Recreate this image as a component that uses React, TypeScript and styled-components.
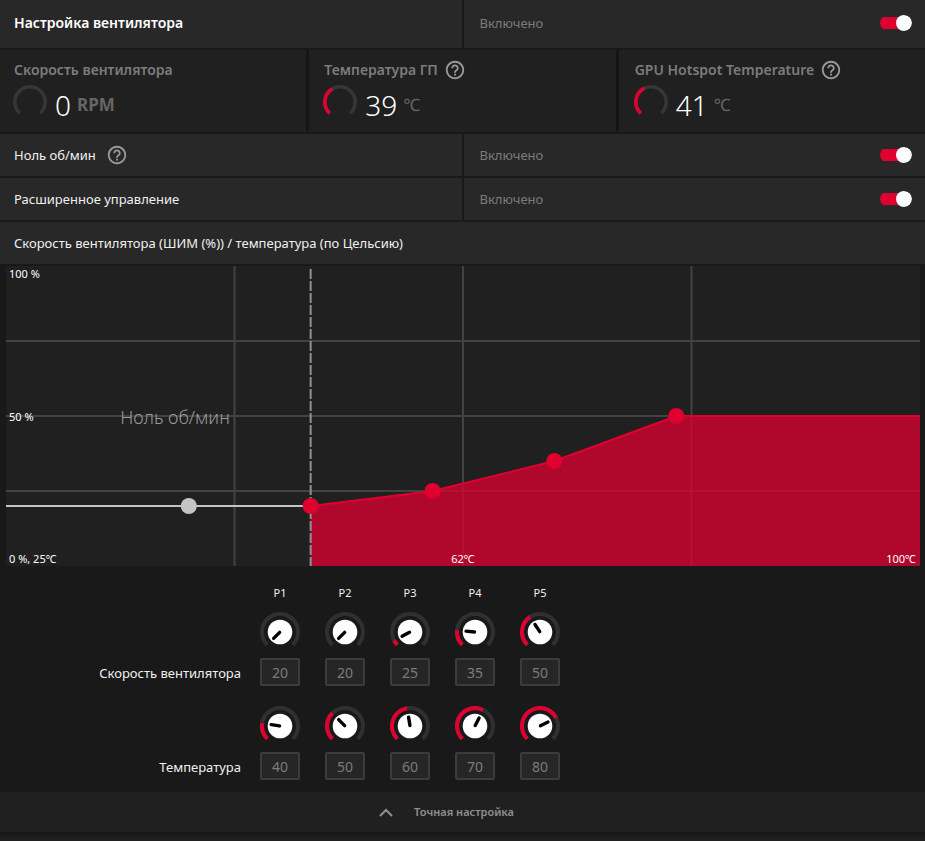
import React, { useState } from "react";
import styled, { createGlobalStyle, css } from "styled-components";
import { MdHelpOutline } from "react-icons/md";

const red = "#e00030";

const GlobalStyle = createGlobalStyle`
  *, *::before, *::after { box-sizing: border-box; }
  body {
    margin: 0;
    background: #191919;
    color: #f0f0f0;
    font-family: "Noto Sans", "Open Sans", "Noto Sans CJK SC", sans-serif;
    font-size: 13px;
    line-height: 20px;
  }
`;

const Page = styled.main`
  display: flex;
  flex-direction: column;
  min-height: 100vh;
`;

const Panel = styled.section`
  display: flex;
  flex-direction: column;
  gap: 2px;
`;

const NameCell = styled.div`
  display: flex;
  align-items: center;
  gap: 10px;
  padding: 0 14px;
  background: #282828;
`;

const ValueCell = styled.label`
  display: flex;
  align-items: center;
  justify-content: space-between;
  padding: 0 13px 0 16px;
  background: #282828;
  color: #7c7c7c;
`;

const SettingRow = styled.div<{ $header?: boolean }>`
  display: grid;
  grid-template-columns: 1fr 1fr;
  gap: 2px;
  min-height: 42px;

  ${(p) =>
    p.$header &&
    css`
      min-height: 48px;
      ${NameCell}, ${ValueCell} {
        padding-bottom: 2px;
      }
      ${NameCell} {
        color: #ffffff;
        font-size: 14px;
        font-weight: 600;
      }
    `}
`;

const Switch = styled.input`
  appearance: none;
  display: flex;
  align-items: center;
  width: 32px;
  height: 16px;
  margin: 0;
  border-radius: 8px;
  background: linear-gradient(${red}, ${red}) 0 50% / 24px 12px no-repeat;
  clip-path: inset(0 round 8px);
  cursor: pointer;

  &::before {
    content: "";
    width: 16px;
    height: 16px;
    margin-left: 16px;
    border-radius: 50%;
    background: #ffffff;
  }
  &:not(:checked) {
    filter: grayscale(1);
  }
  &:not(:checked)::before {
    margin-left: 0;
  }
`;

const HelpButton = styled.button`
  display: flex;
  padding: 0;
  border: 0;
  background: none;
  color: #9a9a9a;
  font-size: 22px;
  cursor: pointer;
`;

const Stats = styled.div`
  display: grid;
  grid-template-columns: repeat(3, 1fr);
  gap: 3px;
  background: #151515;
`;

const StatCard = styled.div`
  display: flex;
  flex-direction: column;
  height: 82px;
  padding: 9px 14px 0 15px;
  background: #202020;
  &:first-child {
    padding-left: 14px;
  }
  &:last-child {
    padding-left: 16px;
  }
`;

const StatTitle = styled.div`
  display: flex;
  align-items: center;
  gap: 6px;
  height: 22px;
  color: #7c7c7c;
  font-size: 14px;
  font-weight: 600;
`;

const StatBody = styled.div`
  display: flex;
  align-items: flex-start;
  height: 40px;
`;

const Gauge = styled.svg`
  width: 34px;
  height: 34px;
  margin: 4px 8px 0 -1px;
  flex: none;
`;

const StatValue = styled.span`
  color: #ffffff;
  font-size: 28px;
  font-weight: 300;
  line-height: 48px;
`;

const StatUnit = styled.span<{ $bold?: boolean }>`
  margin-left: 6px;
  color: #666666;
  font-size: 17px;
  font-weight: ${(p) => (p.$bold ? 700 : 400)};
  line-height: 48px;
`;

const ChartTitle = styled.h2`
  display: flex;
  align-items: center;
  height: 42px;
  margin: 0;
  padding: 0 14px;
  background: #282828;
  font-size: 13px;
  font-weight: 400;
`;

const ChartArea = styled.div`
  position: relative;
  height: 300px;
  margin: 0 5px 0 6px;
  background: #202020;
`;

const ChartSvg = styled.svg`
  display: block;
  width: 100%;
  height: 300px;
`;

const places = {
  top: css`top: 0; left: 3px;`,
  middle: css`top: 143px; left: 3px;`,
  origin: css`bottom: -1px; left: 3px;`,
  center: css`bottom: -1px; left: 0; right: 0; text-align: center;`,
  end: css`bottom: -1px; right: 4px;`,
  zone: css`top: 139px; left: 0; width: 37%; text-align: center;`,
};

const ChartLabel = styled.span<{ $place: keyof typeof places }>`
  position: absolute;
  color: ${(p) => (p.$place === "zone" ? "#9a9a9a" : "#ffffff")};
  font-size: ${(p) => (p.$place === "zone" ? 18 : 11)}px;
  font-weight: ${(p) => (p.$place === "zone" ? 300 : 400)};
  line-height: ${(p) => (p.$place === "zone" ? 24 : 16)}px;
  pointer-events: none;
  ${(p) => places[p.$place]}
`;

const Points = styled.div`
  display: flex;
  flex-direction: column;
  gap: 12px;
  padding: 20px 0 12px;
`;

const PointControls = styled.div`
  display: flex;
  flex-direction: column;
  gap: 20px;
`;

const PointRow = styled.div`
  display: grid;
  grid-template-columns: 241px repeat(5, 40px);
  column-gap: 25px;
  margin-left: -6px;
`;

const PointName = styled.span`
  font-size: 11px;
  line-height: 14px;
  text-align: center;
  &:first-child {
    grid-column: 2;
  }
`;

const PointsLabel = styled.span`
  justify-self: end;
  margin: 51px -6px 0 0;
`;

const PointControl = styled.div`
  display: flex;
  flex-direction: column;
  align-items: center;
  gap: 6px;
`;

const Knob = styled.svg`
  display: block;
  width: 40px;
  height: 40px;
`;

const NumberBox = styled.input`
  width: 40px;
  height: 28px;
  padding: 0;
  border: 2px solid #3c3c3c;
  border-radius: 2px;
  background: #262626;
  color: #7c7c7c;
  font: inherit;
  font-size: 14px;
  text-align: center;
`;

const TuneButton = styled.button`
  display: flex;
  align-items: center;
  justify-content: center;
  gap: 21px;
  width: 100%;
  height: 40px;
  padding: 0 32px 0 0;
  border: 0;
  background: #202020;
  color: #909090;
  font: inherit;
  font-size: 11px;
  font-weight: 600;
  cursor: pointer;
`;

const Footer = styled.div`
  flex: 1;
  min-height: 9px;
  background: linear-gradient(#161616, #212020 8px);
`;

function polar(c: number, r: number, deg: number) {
  const a = (deg * Math.PI) / 180;
  return [c + r * Math.sin(a), c - r * Math.cos(a)];
}

function arc(c: number, r: number, start: number, sweep: number) {
  const [x1, y1] = polar(c, r, start);
  const [x2, y2] = polar(c, r, start + sweep);
  return `M${x1} ${y1}A${r} ${r} 0 ${sweep > 180 ? 1 : 0} 1 ${x2} ${y2}`;
}

function Help({ about }: { about: string }) {
  return (
    <HelpButton type="button" aria-label={about}>
      <MdHelpOutline />
    </HelpButton>
  );
}

function Toggle() {
  const [on, setOn] = useState(true);
  return (
    <ValueCell>
      {on ? "Включено" : "Отключено"}
      <Switch type="checkbox" role="switch" checked={on} onChange={() => setOn(!on)} />
    </ValueCell>
  );
}

interface StatProps {
  title: string;
  value: number;
  unit: string;
  percent: number;
  help?: boolean;
}

function Stat({ title, value, unit, percent, help }: StatProps) {
  return (
    <StatCard>
      <StatTitle>
        {title}
        {help && <Help about={title} />}
      </StatTitle>
      <StatBody>
        <Gauge viewBox="0 0 34 34" fill="none" strokeWidth="3.6" aria-hidden>
          <path d={arc(17, 15.2, 222, 276)} stroke="#363636" />
          {percent > 0 && <path d={arc(17, 15.2, 222, percent * 2.76)} stroke={red} />}
        </Gauge>
        <StatValue>{value}</StatValue>
        <StatUnit $bold={unit === "RPM"}>{unit}</StatUnit>
      </StatBody>
    </StatCard>
  );
}

const speeds = [20, 20, 25, 35, 50];
const temps = [40, 50, 60, 70, 80];
const xOf = (t: number) => ((t - 25) / 75) * 100;
const yOf = (s: number) => (100 - s) * 3;

function Chart() {
  const line = temps.slice(1).map((t, i) => `${xOf(t)},${yOf(speeds[i + 1])}`);
  const curve = [...line, `100,${yOf(speeds[4])}`].join(" ");
  const zero = `${xOf(temps[1])}%`;
  return (
    <ChartArea>
      <ChartSvg aria-hidden>
        <g stroke="#424242" strokeWidth="2">
          {[25, 50, 75].map((p) => (
            <line key={p} x1={`${p}%`} x2={`${p}%`} y1="0" y2="300" />
          ))}
          {[75, 150, 225].map((y) => (
            <line key={y} x1="0" x2="100%" y1={y} y2={y} />
          ))}
        </g>
        <svg width="100%" height="300" viewBox="0 0 100 300" preserveAspectRatio="none">
          <polygon points={`${curve} 100,300 ${xOf(temps[1])},300`} fill={red} fillOpacity="0.75" />
          <polyline
            points={curve}
            fill="none"
            stroke={red}
            strokeWidth="2"
            vectorEffect="non-scaling-stroke"
          />
        </svg>
        <line x1={zero} x2={zero} y1="3" y2="300" stroke="#919191" strokeWidth="2" strokeDasharray="10 2" />
        <line x1="0" x2={zero} y1={yOf(20)} y2={yOf(20)} stroke="#c4c4c4" strokeWidth="2" />
        {temps.map((t, i) => (
          <circle key={t} cx={`${xOf(t)}%`} cy={yOf(speeds[i])} r="8" fill={i ? red : "#c4c4c4"} />
        ))}
      </ChartSvg>
      <ChartLabel $place="top">100 %</ChartLabel>
      <ChartLabel $place="middle">50 %</ChartLabel>
      <ChartLabel $place="origin">0 %, 25℃</ChartLabel>
      <ChartLabel $place="center">62℃</ChartLabel>
      <ChartLabel $place="end">100℃</ChartLabel>
      <ChartLabel $place="zone">Ноль об/мин</ChartLabel>
    </ChartArea>
  );
}

function Point({ value, min, label }: { value: number; min: number; label: string }) {
  const [text, setText] = useState(String(value));
  const amount = Number(text) || min;
  const sweep = ((Math.min(100, Math.max(min, amount)) - min) / (100 - min)) * 270;
  return (
    <PointControl>
      <Knob viewBox="0 0 40 40" fill="none" strokeWidth="4" aria-hidden>
        <path d={arc(20, 18, 225, 270)} stroke="#303030" />
        {sweep > 0 && <path d={arc(20, 18, 225, sweep)} stroke={red} />}
        <circle cx="20" cy="20" r="12.3" fill="#ffffff" />
        <path
          d="M20 19.5V11"
          stroke="#000000"
          strokeWidth="3.4"
          strokeLinecap="round"
          transform={`rotate(${225 + sweep} 20 20)`}
        />
      </Knob>
      <NumberBox aria-label={label} value={text} onChange={(e) => setText(e.target.value)} />
    </PointControl>
  );
}

function PointSettings({ label, values, min }: { label: string; values: number[]; min: number }) {
  return (
    <PointRow>
      <PointsLabel>{label}</PointsLabel>
      {values.map((v, i) => (
        <Point key={i} value={v} min={min} label={`${label} P${i + 1}`} />
      ))}
    </PointRow>
  );
}

export default function App() {
  return (
    <Page>
      <GlobalStyle />
      <Panel>
        <SettingRow $header>
          <NameCell>Настройка вентилятора</NameCell>
          <Toggle />
        </SettingRow>
        <Stats>
          <Stat title="Скорость вентилятора" value={0} unit="RPM" percent={0} />
          <Stat title="Температура ГП" value={39} unit="℃" percent={39} help />
          <Stat title="GPU Hotspot Temperature" value={41} unit="℃" percent={41} help />
        </Stats>
        <SettingRow>
          <NameCell>
            Ноль об/мин
            <Help about="Ноль об/мин" />
          </NameCell>
          <Toggle />
        </SettingRow>
        <SettingRow>
          <NameCell>Расширенное управление</NameCell>
          <Toggle />
        </SettingRow>
        <ChartTitle>Скорость вентилятора (ШИМ (%)) / температура (по Цельсию)</ChartTitle>
        <Chart />
      </Panel>
      <Points>
        <PointRow>
          {temps.map((t, i) => (
            <PointName key={t}>P{i + 1}</PointName>
          ))}
        </PointRow>
        <PointControls>
          <PointSettings label="Скорость вентилятора" values={speeds} min={20} />
          <PointSettings label="Температура" values={temps} min={25} />
        </PointControls>
      </Points>
      <TuneButton type="button">
        <svg width="14" height="9" viewBox="0 0 14 9" fill="none" stroke="#909090" strokeWidth="2" aria-hidden>
          <path d="M1 8L7 2L13 8" />
        </svg>
        Точная настройка
      </TuneButton>
      <Footer />
    </Page>
  );
}
